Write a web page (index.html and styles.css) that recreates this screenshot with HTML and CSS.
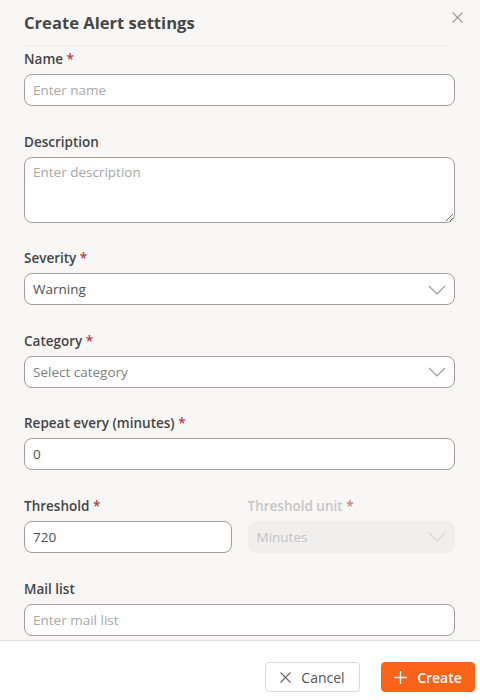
FILE: index.html
```html
<!DOCTYPE html>
<html lang="en">
<head>
<meta charset="utf-8">
<title>Create Alert settings</title>
<link rel="stylesheet" href="styles.css">
</head>
<body>
<div class="dialog">
  <div class="content">
    <div class="header">
      <h1 class="title">Create Alert settings</h1>
    </div>
    <button class="close" aria-label="Close">
      <svg width="11" height="11" viewBox="0 0 11 11"><path d="M0.5 0.5L10.5 10.5M10.5 0.5L0.5 10.5" stroke="#9b9b9b" stroke-width="1.1" fill="none"/></svg>
    </button>
    <form class="form">
      <div class="field">
        <label class="label">Name <span class="req">*</span></label>
        <input class="input" type="text" placeholder="Enter name">
      </div>
      <div class="field">
        <label class="label">Description</label>
        <textarea class="input textarea" placeholder="Enter description"></textarea>
      </div>
      <div class="field">
        <label class="label">Severity <span class="req">*</span></label>
        <div class="input select"><span class="value">Warning</span>
          <svg class="chev" width="18" height="10" viewBox="0 0 18 10"><path d="M1 1L9 9L17 1" stroke="#9d9d9d" stroke-width="1.2" fill="none"/></svg>
        </div>
      </div>
      <div class="field">
        <label class="label">Category <span class="req">*</span></label>
        <div class="input select"><span class="placeholder">Select category</span>
          <svg class="chev" width="18" height="10" viewBox="0 0 18 10"><path d="M1 1L9 9L17 1" stroke="#9d9d9d" stroke-width="1.2" fill="none"/></svg>
        </div>
      </div>
      <div class="field">
        <label class="label">Repeat every (minutes) <span class="req">*</span></label>
        <input class="input" type="text" value="0">
      </div>
      <div class="row">
        <div class="field">
          <label class="label">Threshold <span class="req">*</span></label>
          <input class="input" type="text" value="720">
        </div>
        <div class="field disabled">
          <label class="label">Threshold unit <span class="req">*</span></label>
          <div class="input select"><span class="value">Minutes</span>
            <svg class="chev" width="18" height="10" viewBox="0 0 18 10"><path d="M1 1L9 9L17 1" stroke="#d6d6d6" stroke-width="1.2" fill="none"/></svg>
          </div>
        </div>
      </div>
      <div class="field">
        <label class="label">Mail list</label>
        <input class="input" type="text" placeholder="Enter mail list">
      </div>
    </form>
  </div>
  <div class="footer">
    <button class="btn btn-cancel" type="button">
      <svg width="11" height="11" viewBox="0 0 11 11"><path d="M0.5 0.5L10.5 10.5M10.5 0.5L0.5 10.5" stroke="#666" stroke-width="1.1" fill="none"/></svg>
      Cancel
    </button>
    <button class="btn btn-create" type="button">
      <svg width="13" height="13" viewBox="0 0 13 13"><path d="M6.5 0V13M0 6.5H13" stroke="#fff" stroke-width="1.3" fill="none"/></svg>
      Create
    </button>
  </div>
</div>
</body>
</html>
```

FILE: styles.css
```css
* { box-sizing: border-box; }

html, body {
  margin: 0;
  padding: 0;
  height: 700px;
  overflow: hidden;
}

body {
  font-family: "Open Sans", "Noto Sans", sans-serif;
  background: #f8f7f6;
  color: #454545;
}

.dialog {
  height: 700px;
  display: flex;
  flex-direction: column;
  position: relative;
}

.content {
  flex: 1;
  overflow: hidden;
  padding: 0 25px 0 24px;
}

.header {
  padding: 11px 0 10px;
  margin-right: 6px;
  border-bottom: 1px solid #ecebe9;
}

.title {
  margin: 0;
  font-size: 16.6px;
  line-height: 24px;
  font-weight: 700;
  color: #474747;
}

.close {
  position: absolute;
  top: 12px;
  right: 17px;
  padding: 0;
  border: 0;
  background: none;
  line-height: 0;
}

.form {
  padding-top: 4px;
}

.field {
  display: flex;
  flex-direction: column;
  margin-bottom: 26.6px;
}

.label {
  font-size: 13.5px;
  line-height: 18px;
  font-weight: 600;
  color: #454545;
  margin-bottom: 6px;
}

.req {
  color: #b93a48;
}

.input {
  height: 32px;
  width: 100%;
  border: 1px solid #9c9ea2;
  border-radius: 8px;
  background: #fff;
  padding: 0 8px;
  font-family: inherit;
  font-size: 13.5px;
  color: #505050;
  outline: none;
}

.input::placeholder {
  color: #a8a8a8;
}

.textarea {
  height: 66px;
  padding: 5px 8px;
  line-height: 18px;
  resize: vertical;
  display: block;
}

.select {
  display: flex;
  align-items: center;
  justify-content: space-between;
  padding-right: 8px;
}

.select .placeholder {
  color: #808080;
}

.chev {
  margin-top: 1px;
}

.row {
  display: grid;
  grid-template-columns: 1fr 1fr;
  column-gap: 16px;
}

.disabled .label {
  color: #c6c6c6;
}

.disabled .req {
  color: #d07b85;
}

.disabled .input {
  background: #f0efee;
  border-color: #f0efee;
  color: #c4c4c4;
}

.footer {
  height: 60px;
  flex: none;
  background: #fff;
  border-top: 1px solid #dcdcdc;
  display: flex;
  justify-content: flex-end;
  align-items: flex-start;
  gap: 21px;
  padding: 21px 5px 0 0;
}

.btn {
  height: 30px;
  border-radius: 4px;
  font-family: inherit;
  font-size: 14px;
  display: flex;
  align-items: center;
  justify-content: center;
  gap: 10px;
  padding: 0;
}

.btn-cancel {
  width: 95px;
  background: #fff;
  border: 1px solid #dadada;
  color: #555;
}

.btn-create {
  width: 94px;
  background: #fa6318;
  border: 1px solid #fa6318;
  color: #fff;
  font-weight: 600;
}
```
